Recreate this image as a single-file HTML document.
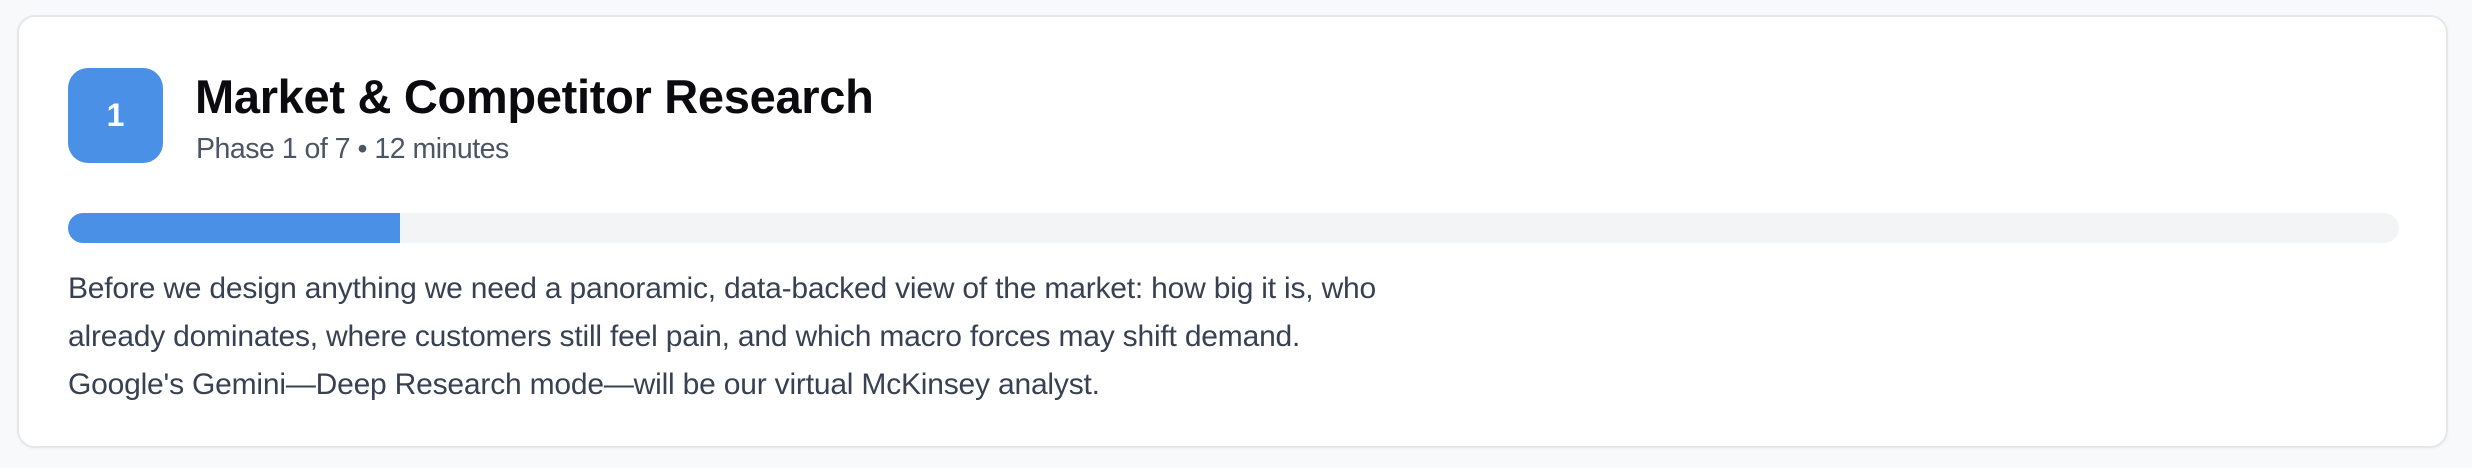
<!DOCTYPE html>
<html><head><meta charset="utf-8"><style>
*{margin:0;padding:0;box-sizing:border-box}
body{width:2472px;height:468px;background:#f8f9fb;font-family:"Liberation Sans",sans-serif;position:relative;overflow:hidden}
.card{position:absolute;left:17px;top:15px;width:2431px;height:433px;background:#fff;border:2px solid #e5e7eb;border-radius:18px;box-shadow:0 1px 3px rgba(0,0,0,.04)}
.badge{position:absolute;left:68px;top:68px;width:95px;height:95px;background:#4a90e6;border-radius:20px;color:#fff;font-size:32px;font-weight:bold;display:flex;align-items:center;justify-content:center}
.title{position:absolute;left:195px;top:69px;font-size:47px;font-weight:bold;color:#0b0b0f;letter-spacing:-0.3px;white-space:nowrap}
.sub{position:absolute;left:196px;top:133px;font-size:28.5px;color:#4b5563;letter-spacing:-0.5px;white-space:nowrap}
.track{position:absolute;left:68px;top:213px;width:2331px;height:30px;background:#f3f4f6;border-radius:15px;overflow:hidden}
.fill{width:332px;height:100%;background:#4a90e6}
.p{position:absolute;left:68px;top:265px;font-size:30px;line-height:48px;color:#374151;white-space:nowrap;letter-spacing:-0.2px}
</style></head><body>
<div class="card"></div>
<div class="badge">1</div>
<div class="title">Market &amp; Competitor Research</div>
<div class="sub">Phase 1 of 7 • 12 minutes</div>
<div class="track"><div class="fill"></div></div>
<div class="p">Before we design anything we need a panoramic, data-backed view of the market: how big it is, who<br>already dominates, where customers still feel pain, and which macro forces may shift demand.<br>Google's Gemini—Deep Research mode—will be our virtual McKinsey analyst.</div>
</body></html>
